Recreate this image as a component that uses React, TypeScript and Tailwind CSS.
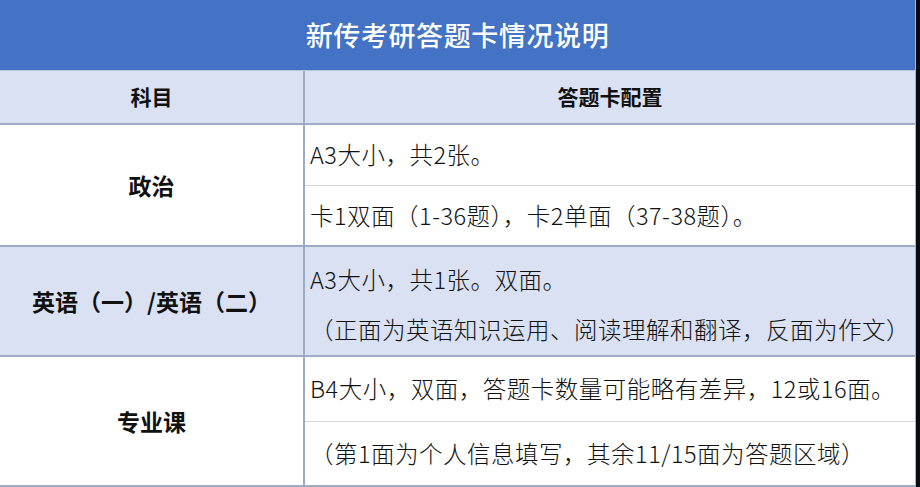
const rows = [
  {
    subject: '政治',
    bg: 'bg-white',
    height: 'h-[122px]',
    lines: ['A3大小，共2张。', '卡1双面（1-36题），卡2单面（37-38题）。'],
    divided: true,
  },
  {
    subject: '英语（一）/英语（二）',
    bg: 'bg-[#d9e1f2]',
    height: 'h-[110px]',
    lines: ['A3大小，共1张。双面。', '（正面为英语知识运用、阅读理解和翻译，反面为作文）'],
    divided: false,
  },
  {
    subject: '专业课',
    bg: 'bg-white',
    height: 'h-[130px]',
    lines: ['B4大小，双面，答题卡数量可能略有差异，12或16面。', '（第1面为个人信息填写，其余11/15面为答题区域）'],
    divided: true,
  },
];

export default function App() {
  return (
    <div className="flex w-[920px] h-[487px] overflow-hidden bg-[#0b0b14] font-['Noto_Sans_CJK_SC',sans-serif] text-[#111]">
      <div className="flex flex-col w-[916px] h-full bg-white border-r border-[#aab6c8]">
        <div className="h-[70px] shrink-0 bg-[#4472c4] flex items-center justify-center text-white text-[27px] font-medium tracking-[0.6px]">
          新传考研答题卡情况说明
        </div>

        <div className="h-[55px] shrink-0 flex bg-[#d9e1f2] border-t border-[#b4c2da] border-b-2 border-b-[#9cacc4] text-[21px] font-bold">
          <div className="w-[305px] flex items-center justify-center border-r-2 border-[#9cacc4]">科目</div>
          <div className="flex-1 flex items-center justify-center">答题卡配置</div>
        </div>

        {rows.map((row) => (
          <div
            key={row.subject}
            className={`${row.height} shrink-0 flex ${row.bg} border-b-2 border-[#9cacc4]`}
          >
            <div className="w-[305px] flex items-center justify-center border-r-2 border-[#9cacc4] text-[23px] font-bold">
              {row.subject}
            </div>
            {row.divided ? (
              <div className="flex-1 flex flex-col text-[23.5px] font-light tracking-[0.5px]">
                <div className="flex-1 flex items-center pl-[5px] border-b border-[#d6d6d6]">{row.lines[0]}</div>
                <div className="flex-1 flex items-center pl-[5px]">{row.lines[1]}</div>
              </div>
            ) : (
              <div className="flex-1 flex flex-col pt-[6px] text-[23.5px] font-light tracking-[0.5px]">
                <div className="h-[53px] flex items-center pl-[5px]">{row.lines[0]}</div>
                <div className="h-[48px] flex items-center pl-[5px]">{row.lines[1]}</div>
              </div>
            )}
          </div>
        ))}
      </div>
      <div className="flex-1" />
    </div>
  );
}
